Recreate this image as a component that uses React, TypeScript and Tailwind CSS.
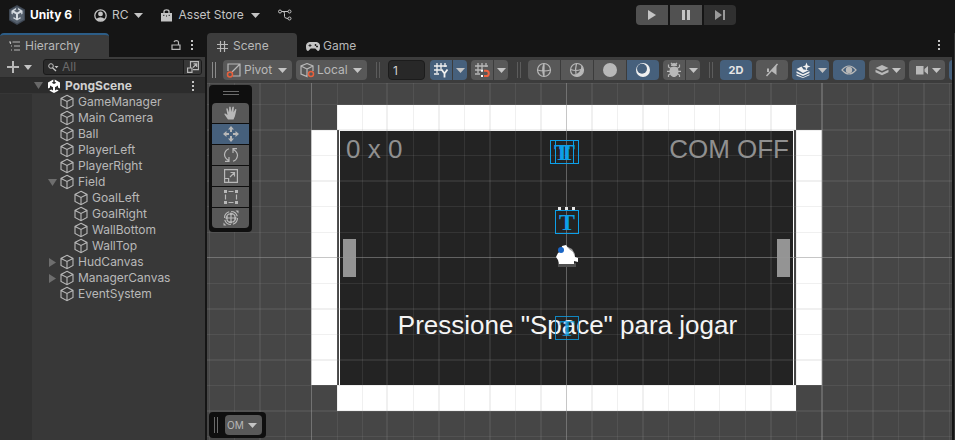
import React from "react";

type IconProps = { className?: string };

function Caret({ className = "h-[5px] w-[9px] text-[#c4c4c4]" }: IconProps) {
  return (
    <svg viewBox="0 0 10 6" preserveAspectRatio="none" className={`shrink-0 ${className}`} fill="currentColor" aria-hidden="true">
      <path d="M0 0h10L5 6z" />
    </svg>
  );
}

function Icon({ children, size = "size-4", box = "0 0 16 16" }: { children: React.ReactNode; size?: string; box?: string }) {
  return (
    <svg viewBox={box} className={`shrink-0 ${size}`} fill="none" stroke="currentColor" strokeWidth="1.2" aria-hidden="true">
      {children}
    </svg>
  );
}

function Kebab() {
  return (
    <svg viewBox="0 0 2 10" className="h-[10px] w-[2px]" fill="#c4c4c4" aria-hidden="true">
      <path d="M0 0h2v2H0zM0 4h2v2H0zM0 8h2v2H0z" />
    </svg>
  );
}

function Handle({ className = "text-[#6b6b6b]" }: IconProps) {
  return <div className={`h-4 w-1 shrink-0 border-x border-current ${className}`} />;
}

const CubeIcon = () => (
  <Icon>
    <path d="M8 1.3 14 4.4v7L8 14.7 2 11.4v-7zM2 4.4l6 3 6-3M8 7.4v7.3" strokeWidth="1.1" />
  </Icon>
);

const UnityLogo = () => (
  <svg viewBox="0 0 18 20" className="h-5 w-[18px] shrink-0" aria-hidden="true">
    <path d="M9 0l8 4.6v10.6L9 20l-8-4.8V4.6z" fill="#3e4753" />
    <path d="M9 1.5l6.8 4v9L9 18.4 2.200 14.500v-9z" fill="#56616e" />
    <path d="M8 3 3.500 5.800v3l1.300.8V7.400L8 9.200v4.200l-2-1.200-1.200.8L9 15.600l4.200-2.600-1.200-.8-2 1.200V9.200l3.200-1.800v2.200l1.300-.8v-3L10 3v1.500l2 1.200-3 1.800-3-1.800 2-1.200z" fill="#d5dbe1" />
  </svg>
);

const SceneLogo = () => (
  <svg viewBox="0 0 14 14" className="size-[14px] shrink-0" fill="#fff" aria-hidden="true">
    <path d="M6.300.500v2.300L4.700 3.700 7 5.100l2.300-1.400-1.600-.9V.500L13 3.600v6l-2-1.100V6.600L8 8.300v3.200l1.800-1 1.900 1.100L7 14l-4.700-2.400 1.900-1.100 1.800 1V8.300L3 6.600v1.900L1 9.600v-6z" />
  </svg>
);

function Header() {
  return (
    <header className="flex h-[33px] pb-[3px] text-[#c4c4c4]">
      <div className="flex flex-[628] items-center pl-2">
        <UnityLogo />
        <h1 className="ml-1 font-bold text-white">Unity 6</h1>
        <div className="ml-[7px] h-3 w-px bg-[#4a4a4a]" />
        <button className="ml-3.5 flex items-center gap-[5px]">
          <Icon size="size-[13px]">
            <circle cx="8" cy="8" r="7" strokeWidth="1.6" />
            <circle cx="8" cy="6" r="3" fill="currentColor" stroke="none" />
            <path d="M2.500 12.500Q8 7.500 13.500 12.500 8 17 2.500 12.500z" fill="currentColor" stroke="none" />
          </Icon>
          RC
          <Caret />
        </button>
        <button className="ml-[18px] flex items-center gap-[7px]">
          <svg viewBox="0 0 11 13" className="h-[13px] w-[11px]" fill="none" stroke="currentColor" aria-hidden="true">
            <path d="M0 4h11v8.500H0z" fill="currentColor" stroke="none" />
            <path d="M3 5V2.500q0-1.700 2.500-1.700T8 2.500V5" strokeWidth="1.300" />
            <path d="M2.800 5.800v1.200M5.500 6.500v1M8.200 5.800v1.200" stroke="#151515" />
          </svg>
          Asset Store
          <Caret />
        </button>
        <button className="ml-[18px]" aria-label="Version control">
          <svg viewBox="0 0 14 12" className="h-3 w-[14px]" fill="none" stroke="currentColor" aria-hidden="true">
            <circle cx="2" cy="2.500" r="1.500" />
            <circle cx="11.500" cy="2.500" r="1.500" />
            <circle cx="11.500" cy="9.500" r="1.500" />
            <path d="M3.500 2.500H10M5 2.500q1.500 0 1.500 2v3q0 2 3.500 2" />
          </svg>
        </button>
      </div>
      <div className="flex items-center gap-0.5">
        <button aria-label="Play" className="flex h-5 w-8 items-center justify-center rounded-l bg-[#515151]">
          <Icon size="size-[10px]" box="0 0 10 10"><path d="M1 0l8 5-8 5z" fill="currentColor" stroke="none" /></Icon>
        </button>
        <button aria-label="Pause" className="flex h-5 w-8 items-center justify-center bg-[#515151]">
          <Icon size="size-[10px]" box="0 0 10 10"><path d="M1 0h3v10H1zM6 0h3v10H6z" fill="currentColor" stroke="none" /></Icon>
        </button>
        <button aria-label="Step" className="flex h-5 w-8 items-center justify-center rounded-r bg-[#303030] text-[#999]">
          <Icon size="size-[10px]" box="0 0 10 10"><path d="M0 0l7 5-7 5zM8 0h2v10H8z" fill="currentColor" stroke="none" /></Icon>
        </button>
      </div>
      <div className="flex-[219]" />
    </header>
  );
}

type Node = { name: string; child?: boolean; fold?: "open" | "closed" };
const nodes: Node[] = [
  { name: "GameManager" },
  { name: "Main Camera" },
  { name: "Ball" },
  { name: "PlayerLeft" },
  { name: "PlayerRight" },
  { name: "Field", fold: "open" },
  { name: "GoalLeft", child: true },
  { name: "GoalRight", child: true },
  { name: "WallBottom", child: true },
  { name: "WallTop", child: true },
  { name: "HudCanvas", fold: "closed" },
  { name: "ManagerCanvas", fold: "closed" },
  { name: "EventSystem" },
];

function Hierarchy() {
  return (
    <aside className="flex w-[205px] shrink-0 flex-col bg-[#383838]">
      <div className="flex h-6 items-center bg-[#151515]">
        <h2 className="flex h-full w-[109px] items-center gap-1 rounded-t-sm border-t-2 border-[#2c5d87] bg-[#3c3c3c] pl-[9px]">
          <Icon size="size-3" box="0 0 12 12">
            <path d="M0 2h2M3.500 2H11M2 6h1M5 6h6M2 10h1M5 10h6M1.500 2v2" />
          </Icon>
          Hierarchy
        </h2>
        <button aria-label="Lock" className="ml-auto">
          <Icon size="size-[10px]" box="0 0 10 10"><path d="M1 5h8v4.400H1zM7.500 5V2.500Q7.500.600 5.200.600 3.500.600 3 2" /></Icon>
        </button>
        <button aria-label="Hierarchy options" className="mr-3 ml-[10px]"><Kebab /></button>
      </div>
      <div className="flex h-[21px] items-center border-b border-[#2a2a2a] bg-[#3c3c3c] pr-[3px] pl-[7px]">
        <button aria-label="Add" className="flex items-center gap-[5px]">
          <Icon size="size-3" box="0 0 12 12"><path d="M6 0v12M0 6h12" strokeWidth="2" /></Icon>
          <Caret className="h-[5px] w-2 text-[#c4c4c4]" />
        </button>
        <div className="ml-[11px] flex h-4 flex-1 items-center overflow-hidden rounded-[3px] border border-[#1a1a1a] bg-[#2a2a2a]">
          <svg viewBox="0 0 12 10" className="ml-1 h-[10px] w-3 shrink-0" fill="none" stroke="#c4c4c4" aria-hidden="true">
            <circle cx="3" cy="4" r="2.300" />
            <path d="M4.500 5.700 8 9" strokeWidth="1.300" />
            <path d="M6.500 4h4L8.500 6.200z" fill="#c4c4c4" stroke="none" />
          </svg>
          <input aria-label="Search hierarchy" placeholder="All" className="ml-0.5 w-0 flex-1 bg-transparent leading-[14px] outline-none placeholder:text-[#6a6a6a]" />
          <button aria-label="Search window" className="flex h-full w-[18px] items-center justify-center border-l border-[#1a1a1a] bg-[#383838]">
            <Icon size="size-3" box="0 0 12 12"><path d="M3.500 7V.600h8v8H6M.600 7H5v4.400H.600zM6 6.500 9.500 3M6.500 2.800h3.200V6" /></Icon>
          </button>
        </div>
      </div>
      <div className="flex h-4 items-center border-b border-[#363636] bg-[#2c2c2c] pr-[11px] pl-[34px]">
        <Caret className="h-[7px] w-[9px] text-[#686868]" />
        <div className="w-1" />
        <SceneLogo />
        <span className="ml-1 font-bold text-[#d0d0d0]">PongScene</span>
        <button aria-label="Scene options" className="ml-auto"><Kebab /></button>
      </div>
      <div className="flex flex-1">
        <div className="w-8 bg-[#313131]" />
        <ul>
          {nodes.map((n) => (
            <li key={n.name} className={`flex h-4 items-center ${n.child ? "pl-[29px]" : "pl-[15px]"}`}>
              <span className="flex w-3 shrink-0 pl-px">
                {n.fold && <Caret className={`h-[7px] w-[9px] text-[#6e6e6e] ${n.fold === "closed" ? "-rotate-90" : ""}`} />}
              </span>
              <CubeIcon />
              <span className="ml-[3px]">{n.name}</span>
            </li>
          ))}
        </ul>
      </div>
    </aside>
  );
}

function Tool({ label, on, width = "w-8", round = "rounded-sm", children }: { label: string; on?: boolean; width?: string; round?: string; children: React.ReactNode }) {
  return (
    <button aria-label={label} className={`flex h-5 shrink-0 items-center justify-center ${width} ${round} ${on ? "bg-[#46607c]" : "bg-[#585858]"}`}>
      {children}
    </button>
  );
}

function SplitTool({ label, on, children }: { label: string; on?: boolean; children: React.ReactNode }) {
  return (
    <div className="flex shrink-0 gap-px">
      <Tool label={label} on={on} width="w-[22px]" round="rounded-l-sm">{children}</Tool>
      <Tool label={`${label} options`} on={on} width="w-[14px]" round="rounded-r-sm"><Caret /></Tool>
    </div>
  );
}

function Picker({ label, value, width, icon }: { label: string; value: string; width: string; icon?: React.ReactNode }) {
  return (
    <div className={`flex h-5 shrink-0 items-center rounded-sm bg-[#585858] pr-[5px] ${width}`}>
      {icon}
      <select aria-label={label} defaultValue={value} className="ml-0.5 w-0 flex-1 appearance-none bg-transparent leading-4 outline-none">
        <option>{value}</option>
      </select>
      <Caret />
    </div>
  );
}

const gridPath = "M4 1v10M8 1v6M12 1v4M1 4h13M1 8h8M1 12h5";

function SceneToolbar() {
  return (
    <div className="flex h-[26px] items-center gap-1 overflow-hidden bg-[#3c3c3c]">
      <Handle className="mr-[3px] ml-[5px] text-[#8a8a8a]" />
      <Picker label="Pivot mode" value="Pivot" width="w-[69px] pl-[3px]" icon={
        <Icon>
          <path d="M2 9V2h12v12H7M6 10l8-8" />
          <circle cx="4" cy="12.500" r="2.500" stroke="#e8603c" strokeWidth="1.500" />
        </Icon>
      } />
      <Picker label="Handle orientation" value="Local" width="w-[71px] pl-[3px]" icon={
        <Icon>
          <path d="M8 1.500 14 4v5M8 1.500 2 4v8l6 2.500V7L2 4M8 7l6-3" />
          <circle cx="12" cy="12" r="2.500" stroke="#e8603c" strokeWidth="1.500" />
        </Icon>
      } />
      <Handle className="mr-[3px] ml-[5px] text-[#5c5c5c]" />
      <input aria-label="Grid size" defaultValue="1" className="mx-px h-5 w-[37px] shrink-0 rounded-sm border border-[#1c1c1c] bg-[#282828] px-1 text-[#d2d2d2] outline-none" />
      <SplitTool label="Grid" on>
        <svg viewBox="0 0 16 16" className="size-4" fill="none" stroke="#f0f0f0" strokeWidth="1.300" aria-hidden="true">
          <path d={gridPath} />
          <path d="M8.500 7.500 11.500 11.500 14.500 7.500M11.500 11.500V15.500" strokeWidth="1.800" />
        </svg>
      </SplitTool>
      <SplitTool label="Snapping">
        <Icon>
          <path d={gridPath} strokeWidth="1.300" />
          <path d="M10 8.800h2.200a2.600 2.600 0 0 1 0 5.200H10" stroke="#ee6440" strokeWidth="2" />
          <path d="M7 7.800h2v2H7zM7 13h2v2H7z" fill="#fff" stroke="none" />
        </Icon>
      </SplitTool>
      <Handle className="mr-[3px] ml-[5px] text-[#5c5c5c]" />
      <div className="flex shrink-0 gap-px">
        <Tool label="Wireframe" round="rounded-l-sm">
          <Icon><circle cx="8" cy="8" r="6.500" /><path d="M1.500 8Q8 10 14.500 8M8 1.500Q5.500 8 8 14.500M8 1.500v13" /></Icon>
        </Tool>
        <Tool label="Shaded wireframe" round="rounded-none">
          <Icon>
            <path d="M12.500 3.300a6.500 6.500 0 1 1-9.200 9.200Q12 13 12.500 3.300z" fill="currentColor" stroke="none" />
            <circle cx="8" cy="8" r="6.500" /><path d="M1.500 7.500Q7 9.500 12 7.500M7.500 1.500Q6 7 7 12" />
          </Icon>
        </Tool>
        <Tool label="Unlit" round="rounded-none">
          <Icon><circle cx="8" cy="8" r="7" fill="currentColor" stroke="none" /></Icon>
        </Tool>
        <Tool label="Shaded" on round="rounded-r-sm">
          <svg viewBox="0 0 16 16" className="size-4" aria-hidden="true">
            <circle cx="8" cy="8" r="7" fill="#f0f0f0" /><circle cx="7" cy="6.800" r="5" fill="#46607c" />
          </svg>
        </Tool>
      </div>
      <SplitTool label="Debug draw">
        <Icon>
          <path d="M8 4.500c4 0 4.500 3 4.500 5 0 3-2 5.500-4.500 5.500s-4.500-2.500-4.500-5.500c0-2 .500-5 4.500-5zM5 4a3 3 0 0 1 6 0z" fill="currentColor" stroke="none" />
          <path d="M5 6.500 2.500 5V2.500M11 6.500 13.500 5V2.500M1 9.300h14M5 11.500 2.500 13v2M11 11.500l2.500 1.500v2M6 2 5 .800M10 2l1-1.200" />
        </Icon>
      </SplitTool>
      <Handle className="mr-[3px] ml-[5px] text-[#5c5c5c]" />
      <Tool label="2D view" on><span className="text-[11px] font-bold text-[#e6e6e6]">2D</span></Tool>
      <Tool label="Scene audio">
        <Icon><path d="M3 6.500h2v3.500H3z M8 7.500l4.500-4v9.500L8 9.500z" fill="currentColor" stroke="none" /><path d="M2.500 14 13.500 2" strokeWidth="1.500" /></Icon>
      </Tool>
      <SplitTool label="Effects" on>
        <svg viewBox="0 0 16 16" className="size-4" fill="#f0f0f0" aria-hidden="true">
          <path d="M1.500 7 6.500 4.500 8.500 7.500 14 8 8 11zM1.500 9.200 8 12.300l6.500-3.100V11L8 14l-6.500-3zM1.500 12.300 8 15.200l6.500-2.900v1L8 16l-6.500-2.200zM11.500.500l1.100 2.900L15.500 4.500l-2.900 1.100-1.100 2.900-1.100-2.900L7.500 4.500l2.900-1.100z" />
        </svg>
      </SplitTool>
      <Tool label="Scene visibility" on>
        <Icon><path d="M1 8Q8 0 15 8 8 16 1 8z" /><circle cx="8" cy="8" r="3.200" fill="currentColor" stroke="none" /></Icon>
      </Tool>
      <Tool label="Layers" width="w-9">
        <Icon><path d="M8 3 14.500 6 8 9 1.500 6zM1.500 7.800 8 10.700l6.500-2.900v2.400L8 13.200l-6.500-3z" fill="currentColor" stroke="none" /></Icon>
        <span className="w-0.5" /><Caret />
      </Tool>
      <Tool label="Camera" width="w-9">
        <Icon><path d="M2 4h7.500v8.500H2zM10.500 7 14 4v8.500l-3.500-3z" fill="currentColor" stroke="none" /></Icon>
        <span className="w-0.5" /><Caret />
      </Tool>
      <Tool label="Gizmos" on><span /></Tool>
    </div>
  );
}

const thinX = [-357, -332, -281, -229, -204, -153, -102, -51, 51, 102, 128, 153, 179, 230, 281, 332, 383];
const thickX = [-306, -179, -127, -76, -25, 26, 77, 205, 307, 358];
const thinY = [-174, -153, -102, -51, -25, 26, 77, 128, 179];
const thickY = [-127, -76, 52, 103, 154];

function TextGizmo({ x, y }: { x: number; y: number }) {
  return (
    <g transform={`translate(${x} ${y})`}>
      <rect x="0.500" y="0.500" width="23" height="23" fill="none" stroke="#0d9fe8" />
      <text x="12" y="20" textAnchor="middle" fontSize="24" fontWeight="700" fontFamily="'Liberation Serif', serif" fill="#0d9fe8">T</text>
    </g>
  );
}

function SceneDrawing() {
  return (
    <svg className="absolute inset-0 size-full" aria-hidden="true">
      <g transform="translate(359 174)">
        <rect x="-227" y="-126" width="454" height="254" fill="#232323" />
        <g fill="#fff">
          <rect x="-229" y="-152" width="459" height="25" />
          <rect x="-229" y="128" width="459" height="26" />
          <rect x="-255" y="-127" width="26" height="255" />
          <rect x="230" y="-127" width="26" height="255" />
          <rect x="-227" y="-127" width="1" height="255" />
          <rect x="227" y="-127" width="1" height="255" />
          <rect x="-227" y="-127" width="455" height="1" />
        </g>
        <rect x="-223" y="-18" width="13" height="38" fill="#949494" />
        <rect x="211" y="-18" width="13" height="38" fill="#949494" />
        <g fill="#989898" fillOpacity="0.150">
          {thinX.map((x) => <rect key={x} x={x} y="-174" width="1" height="600" />)}
          {thickX.map((x) => <rect key={x} x={x - 1} y="-174" width="2" height="600" />)}
          {thinY.map((y) => <rect key={y} x="-359" y={y} width="1600" height="1" />)}
          {thickY.map((y) => <rect key={y} x="-359" y={y - 1} width="1600" height="2" />)}
        </g>
        <g fill="#989898" fillOpacity="0.550">
          <rect x="-255" y="-174" width="1" height="600" />
          <rect x="255" y="-174" width="2" height="600" fillOpacity="0.400" />
          <rect x="0" y="-174" width="1" height="600" />
          <rect x="-359" y="0" width="1600" height="1" />
        </g>
      </g>
    </svg>
  );
}

function Gizmos() {
  return (
    <svg className="absolute inset-0 size-full" aria-hidden="true">
      <g transform="translate(359 174)">
        <TextGizmo x={-16} y={-117} />
        <TextGizmo x={-11} y={-117} />
        <path d="M-8-50h3v3h-3zM-1-50h3v3h-3zM6-50h3v3H6z" fill="#e8e8e8" />
        <TextGizmo x={-11} y={-47} />
        <g opacity="0.800"><TextGizmo x={-11} y={59} /></g>
        <path d="M-8 6h18v4H-8z" fill="#505050" />
        <path d="M2-10l4 2 3 5v5L0-3z" fill="#9a9a9a" />
        <path d="M-10 0l2-4 3-2 1-5 4-1 3 4 4 3 2 5 3 1v4l-4-1v3H-7L-8 3z" fill="#fff" />
        <circle cx="-5" cy="-7" r="3" fill="#1b66c4" />
      </g>
    </svg>
  );
}

const tools = [
  { label: "View", icon: <path d="M5 14.500 1.500 9.500q-.500-1.200.800-1L4.500 10 3.300 4q.200-1.200 1.300-.500L6 7.500 6.200 2q.700-1.200 1.500 0L8.200 7 9.400 2q.900-1 1.500.200L10.500 7.500l1.700-3.300q1.100-.600 1.200.500L12 11l-1.500 3.500z" fill="currentColor" stroke="none" /> },
  { label: "Move", on: true, icon: <path d="M8 0l3 3.500H9V6H7V3.500H5zM8 16l3-3.500H9V10H7v2.500H5zM0 8l3.500-3v2H6v2H3.500v2zM16 8l-3.500-3v2H10v2h2.500v2z" fill="currentColor" stroke="none" /> },
  { label: "Rotate", icon: <path d="M5.500 13.500Q1.500 11 1.500 7.500 2 3 6 1.700M10.500 2.500Q14.500 5 14.500 8.500 14 13 10 14.300M2 14.300h4V10M14 1.700h-4V6" /> },
  { label: "Scale", icon: <path d="M1.600 10V1.600h12.800v12.800H5.500M1.600 10.500h4v3.900h-4zM7 9l4.500-4.500M7.500 4.500h4v4" /> },
  { label: "Rect", icon: <><path d="M5.500 2.500h5M5.500 13.500h5M2.500 5.500v5M13.500 5.500v5" /><path d="M1 1h3v3H1zM12 1h3v3h-3zM1 12h3v3H1zM12 12h3v3h-3z" fill="currentColor" stroke="none" /></> },
  { label: "Transform", icon: <><circle cx="8" cy="8" r="6.500" strokeDasharray="8 2" /><circle cx="8" cy="8" r="4.500" strokeDasharray="5 2" /><path d="M8 3v10M3 8h10M6.500 4.500 8 3l1.500 1.500M6.500 11.500 8 13l1.500-1.500M4.500 6.500 3 8l1.500 1.500M11.500 6.500 13 8l-1.500 1.500" /><path d="M15.500.500v3L12.500.500zM.500 12.500v3h3z" fill="currentColor" stroke="none" /></> },
];

function SceneView() {
  return (
    <div className="relative flex-1 overflow-hidden bg-[#464646]">
      <SceneDrawing />
      <div className="absolute top-[51px] left-[133px] flex w-[455px] justify-between px-1.5 font-['Liberation_Sans',Arial,sans-serif] text-[26px] leading-[30px] text-[#909090]">
        <span>0 x 0</span>
        <span className="whitespace-nowrap">COM OFF</span>
      </div>
      <p className="absolute top-[227px] left-[133px] w-[455px] text-center font-['Liberation_Sans',Arial,sans-serif] text-[26px] leading-[30px] text-[#f4f4f4]">
        Pressione "Space" para jogar
      </p>
      <Gizmos />
      <div className="absolute top-0.5 left-0.5 flex flex-col items-center rounded bg-[#0f0f0f] p-[3px] pb-1">
        <div className="mt-[3px] mb-2 h-1 w-4 border-y border-[#6b6b6b]" />
        <div className="flex flex-col gap-px overflow-hidden rounded-sm">
          {tools.map((t) => (
            <Tool key={t.label} label={t.label} on={t.on} width="w-[37px]" round="rounded-none"><Icon>{t.icon}</Icon></Tool>
          ))}
        </div>
      </div>
      <div className="absolute bottom-0.5 left-0.5 flex items-center rounded bg-[#0f0f0f] py-[3px] pr-1 pl-[5px] text-[10px]">
        <Handle />
        <div className="w-[7px]" />
        <Picker label="Overlay menu" value="OM" width="w-[37px]" />
      </div>
    </div>
  );
}

function Scene() {
  return (
    <main className="flex min-w-0 flex-1 flex-col">
      <div className="flex h-6 items-center">
        <h2 className="flex h-full w-[90px] items-center gap-[5px] rounded-t-sm bg-[#3c3c3c] pt-0.5 pl-[10px]">
          <Icon size="size-[11px]" box="0 0 11 11"><path d="M3.500 0v11M7.500 0v11M0 3.500h11M0 7.500h11" /></Icon>
          Scene
        </h2>
        <h2 className="flex items-center gap-[3px] pt-0.5 pl-[9px]">
          <svg viewBox="0 0 14 9" className="h-[9px] w-[14px]" aria-hidden="true">
            <path d="M3.500 0h7A3.800 4 0 0 1 14 4.500Q14 9 11.800 9L9.300 6.500H4.700L2.200 9Q0 9 0 4.500A3.800 4 0 0 1 3.500 0z" fill="#c4c4c4" />
            <path d="M2.500 3.500h3M4 2v3M9 2.500h1v1H9zM10.500 4h1v1h-1z" stroke="#151515" fill="#151515" strokeWidth="0.800" />
          </svg>
          Game
        </h2>
        <button aria-label="Scene tab options" className="mr-3 ml-auto"><Kebab /></button>
      </div>
      <SceneToolbar />
      <SceneView />
    </main>
  );
}

export default function App() {
  return (
    <div className="flex h-screen flex-col overflow-hidden bg-[#151515] font-[Inter,sans-serif] text-[12px] leading-4 text-[#b8b8b8]">
      <Header />
      <div className="flex min-h-0 flex-1 gap-0.5">
        <Hierarchy />
        <Scene />
        <div className="w-px bg-[#303030]" />
      </div>
    </div>
  );
}
